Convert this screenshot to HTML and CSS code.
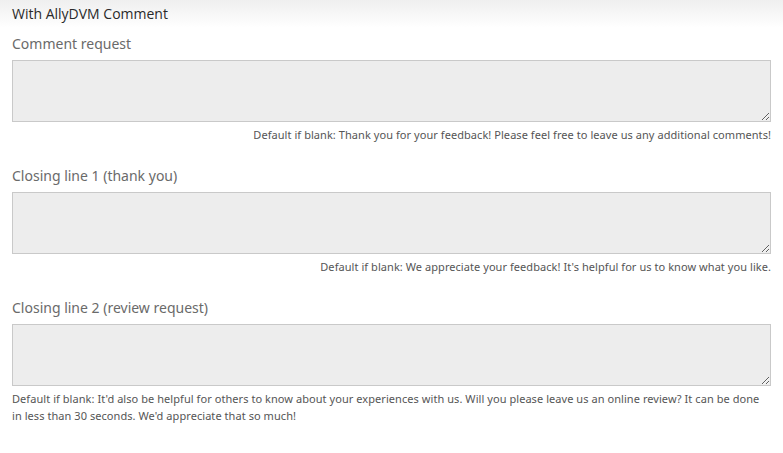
FILE: index.html
```html
<!DOCTYPE html>
<html>
<head>
<meta charset="utf-8">
<link rel="stylesheet" href="styles.css">
</head>
<body>
<div class="header">With AllyDVM Comment</div>
<div class="form">
  <div class="field">
    <label class="label">Comment request</label>
    <textarea class="box"></textarea>
    <div class="help right">Default if blank: Thank you for your feedback! Please feel free to leave us any additional comments!</div>
  </div>
  <div class="field">
    <label class="label">Closing line 1 (thank you)</label>
    <textarea class="box"></textarea>
    <div class="help right">Default if blank: We appreciate your feedback! It's helpful for us to know what you like.</div>
  </div>
  <div class="field">
    <label class="label">Closing line 2 (review request)</label>
    <textarea class="box"></textarea>
    <div class="help">Default if blank: It'd also be helpful for others to know about your experiences with us. Will you please leave us an online review? It can be done in less than 30 seconds. We'd appreciate that so much!</div>
  </div>
</div>
</body>
</html>
```

FILE: styles.css
```css
html, body {
  margin: 0;
  padding: 0;
  background: #fff;
}
body {
  font-family: "Noto Sans", sans-serif;
}
.header {
  height: 28px;
  line-height: 28px;
  padding-left: 12px;
  font-size: 14px;
  color: #2a2a2a;
  font-family: "Open Sans", sans-serif;
  background: linear-gradient(to bottom, #efefef 0%, #ffffff 100%);
}
.form {
  padding: 6px 12px 0 12px;
}
.field {
  display: flex;
  flex-direction: column;
  margin-bottom: 23px;
}
.label {
  font-size: 14px;
  line-height: 20px;
  color: #6a6a6a;
  margin-bottom: 6px;
}
.box {
  display: block;
  box-sizing: border-box;
  width: 759px;
  height: 62px;
  margin: 0;
  background: #ededed;
  border: 1px solid #c9c9c9;
  border-radius: 0;
  padding: 4px;
  resize: both;
}
.help {
  margin-top: 4px;
  font-size: 11px;
  letter-spacing: 0.06px;
  line-height: 17px;
  color: #555;
  width: 759px;
}
.right {
  text-align: right;
}
```
